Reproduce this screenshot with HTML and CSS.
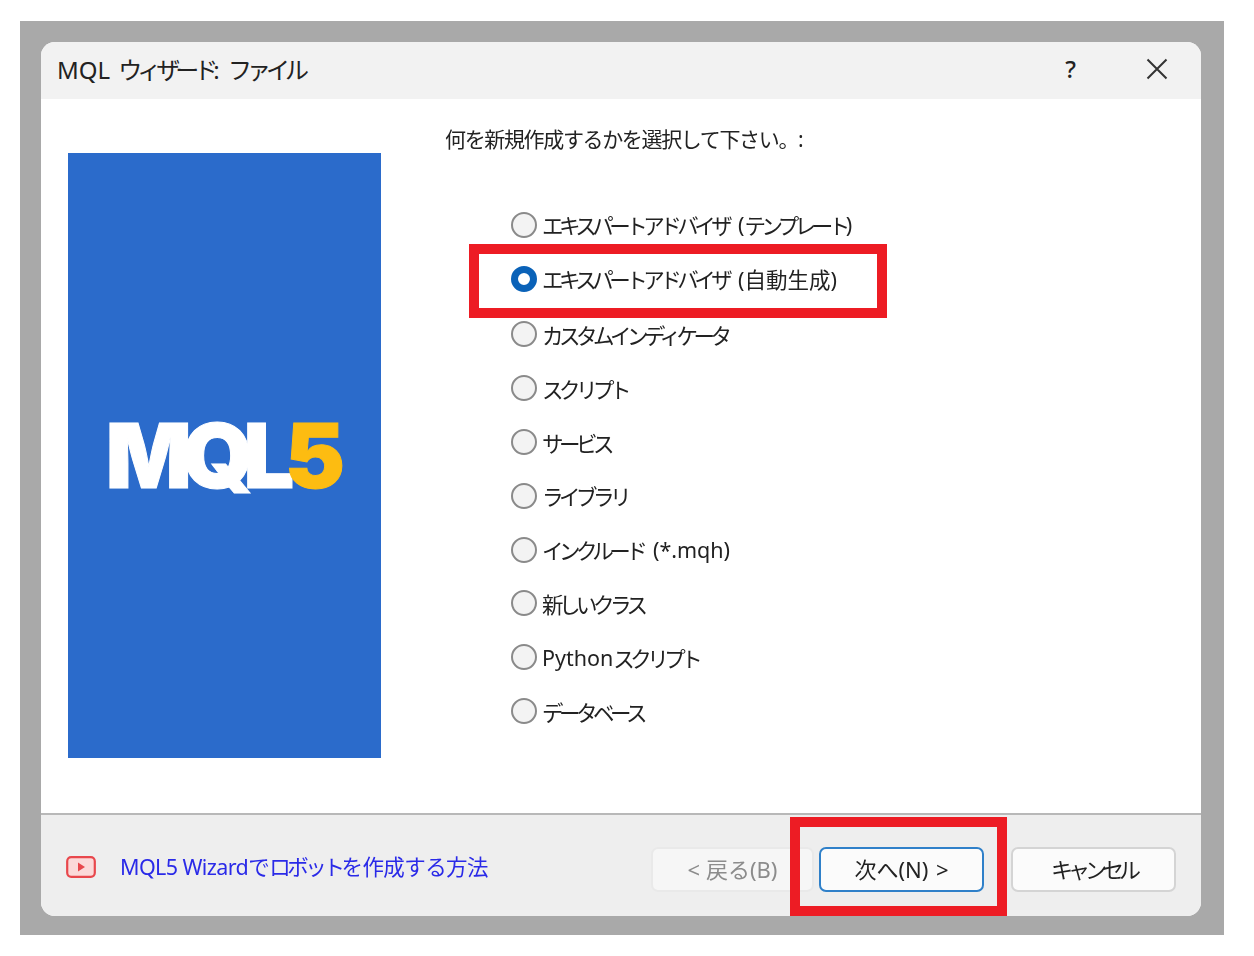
FILE: index.html
```html
<!DOCTYPE html>
<html lang="ja">
<head>
    <meta charset="UTF-8">
    <meta name="viewport" content="width=device-width, initial-scale=1.0">
    <title>MQL ウィザード: ファイル</title>
    <link rel="stylesheet" href="styles.css">
</head>
<body>
    <div class="frame">
        <div class="dialog">
            <div class="titlebar">
                <span class="title">MQL <span class="kana">ウィザード</span>: <span class="kana">ファイル</span></span>
                <span class="help">?</span>
                <svg class="close" width="22" height="22" viewBox="0 0 22 22">
                    <path d="M1.5 1.5 L20.5 20.5 M20.5 1.5 L1.5 20.5" stroke="#333" stroke-width="2" fill="none"/>
                </svg>
            </div>

            <div class="content">
                <div class="banner">
                    <span class="logo">MQL<span class="logo-five">5</span></span>
                </div>
                <div class="main">
                    <p class="prompt">何を新規作成するかを選択して下さい。:</p>
                    <form class="options">
                        <label class="option"><input type="radio" name="kind"><span class="kana">エキスパートアドバイザ</span> (<span class="kana">テンプレート</span>)</label>
                        <label class="option"><input type="radio" name="kind" checked><span class="kana">エキスパートアドバイザ</span> (自動生成)</label>
                        <label class="option"><input type="radio" name="kind"><span class="kana">カスタムインディケータ</span></label>
                        <label class="option"><input type="radio" name="kind"><span class="kana">スクリプト</span></label>
                        <label class="option"><input type="radio" name="kind"><span class="kana">サービス</span></label>
                        <label class="option"><input type="radio" name="kind"><span class="kana">ライブラリ</span></label>
                        <label class="option"><input type="radio" name="kind"><span class="kana">インクルード</span> (*.mqh)</label>
                        <label class="option"><input type="radio" name="kind"><span class="kana">新しいクラス</span></label>
                        <label class="option"><input type="radio" name="kind">Python<span class="kana">スクリプト</span></label>
                        <label class="option"><input type="radio" name="kind"><span class="kana">データベース</span></label>
                    </form>
                </div>
            </div>

            <div class="footer">
                <svg class="video" width="30" height="22" viewBox="0 0 30 22">
                    <rect x="1.2" y="1.2" width="27.6" height="19.6" rx="4" fill="#fbd9d9" stroke="#e8474c" stroke-width="2.2"/>
                    <path d="M12 6.5 L19 11 L12 15.5 Z" fill="#e8474c"/>
                </svg>
                <a class="help-link" href="#">MQL5 Wizardで<span class="kana">ロボット</span>を作成する方法</a>
                <div class="buttons">
                    <button class="btn btn-back" type="button" disabled>&lt; 戻る(B)</button>
                    <button class="btn btn-next" type="button">次へ(N) &gt;</button>
                    <button class="btn btn-cancel" type="button"><span class="kana">キャンセル</span></button>
                </div>
            </div>

            <div class="mark mark-option"></div>
            <div class="mark mark-next"></div>
        </div>
    </div>
</body>
</html>
```

FILE: styles.css
```css
body {
    margin: 0;
    background-color: white;
    font-family: "Noto Sans", "Noto Sans CJK JP", sans-serif;
    color: #222;
}
.frame {
    width: 1160px;
    height: 874px;
    margin: 21px 30px 21px 20px;
    padding: 21px 23px 19px 21px;
    background-color: #a9a9a9;
}
.dialog {
    position: relative;
    height: 100%;
    display: flex;
    flex-direction: column;
    background-color: white;
    border-radius: 14px;
    overflow: hidden;
    filter: blur(0.4px);
}
.kana {
    letter-spacing: -4.5px;
}
.titlebar {
    height: 57px;
    box-sizing: border-box;
    flex: none;
    display: flex;
    align-items: center;
    padding: 0 0 4px 16px;
    background-color: #f2f2f2;
}
.title {
    font-size: 24px;
    white-space: nowrap;
    word-spacing: 2px;
}
.title .kana {
    letter-spacing: -5px;
}
.help {
    margin-left: auto;
    margin-right: 70px;
    font-size: 24px;
    font-weight: 500;
}
.close {
    margin-right: 33px;
}
.content {
    flex: 1;
    display: flex;
    padding: 54px 0 0 27px;
}
.banner {
    width: 313px;
    height: 605px;
    display: flex;
    align-items: center;
    justify-content: center;
    background-color: #2b6bcb;
}
.logo {
    margin-right: 8px;
    font-family: Inter, sans-serif;
    font-size: 90px;
    font-weight: 900;
    letter-spacing: -9.5px;
    color: white;
    line-height: 1;
    -webkit-text-stroke: 1px white;
}
.logo-five {
    color: #fdbc11;
    -webkit-text-stroke: 1px #fdbc11;
}
.main {
    margin-left: 64px;
}
.prompt {
    margin: -28px 0 0;
    height: 28px;
    font-size: 21px;
    line-height: 28px;
    letter-spacing: -1.35px;
    white-space: nowrap;
}
.options {
    display: flex;
    flex-direction: column;
    margin: 45px 0 0 66px;
}
.option {
    height: 53.8px;
    display: flex;
    align-items: center;
    font-size: 21.5px;
    white-space: pre;
    word-spacing: 4px;
}
.option:nth-child(3) {
    margin-top: 2px;
}
.option input {
    appearance: none;
    width: 26px;
    height: 26px;
    margin: 0 5px 0 0;
    border: 2px solid #8a8a8a;
    border-radius: 50%;
    background-color: #f3f3f3;
}
.option input:checked {
    border: 7px solid #0a62b8;
    background-color: white;
}
.footer {
    height: 103px;
    flex: none;
    display: flex;
    align-items: center;
    box-sizing: border-box;
    padding: 8px 25px 0 25px;
    border-top: 2px solid #b8b8b8;
    background-color: #eeeeee;
}
.video {
    margin-bottom: 6px;
}
.help-link {
    margin: 0 0 8px 24px;
    font-size: 21.5px;
    letter-spacing: -0.6px;
    color: #2a2ae8;
    text-decoration: none;
    white-space: nowrap;
}
.help-link .kana {
    letter-spacing: -3.4px;
}
.buttons {
    margin-left: auto;
    display: flex;
    gap: 5px;
}
.btn {
    width: 165px;
    height: 45px;
    padding: 0 0 4px;
    font-family: inherit;
    font-size: 22px;
    color: #222;
    background-color: #fbfbfb;
    border: 2px solid #d4d4d4;
    border-radius: 7px;
}
.btn-back {
    width: 163px;
    color: #8c8c8c;
    background-color: #f6f6f6;
    border-color: #e9e9e9;
}
.btn-next {
    border-color: #2f80c9;
    word-spacing: 2px;
}
.btn-cancel {
    margin-left: 22px;
}
.btn-cancel .kana {
    letter-spacing: -5px;
}
.mark {
    position: absolute;
    box-sizing: border-box;
    border: 10px solid #ed1c24;
}
.mark-option {
    left: 428px;
    top: 202px;
    width: 418px;
    height: 74px;
}
.mark-next {
    left: 749px;
    top: 775px;
    width: 217px;
    height: 99px;
}
```
